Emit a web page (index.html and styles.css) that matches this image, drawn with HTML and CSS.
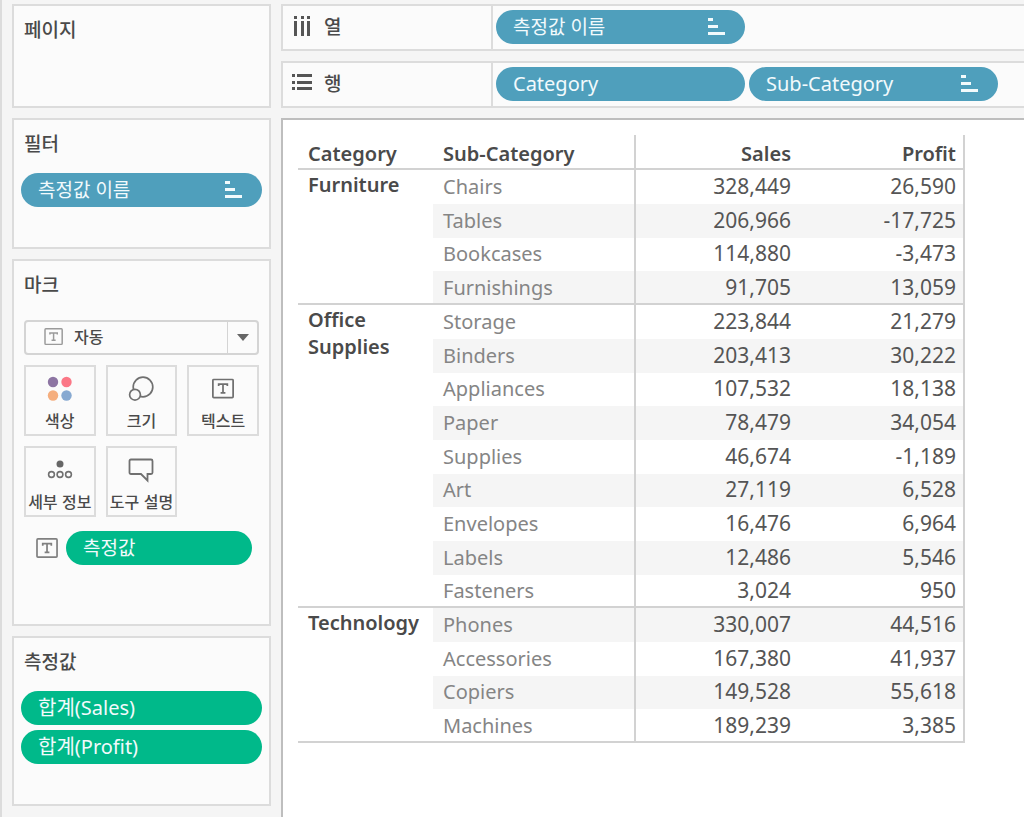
FILE: index.html
```html
<!DOCTYPE html>
<html lang="ko">
<head>
<meta charset="utf-8">
<title>Sales / Profit</title>
<link rel="stylesheet" href="styles.css">
</head>
<body>
<svg class="defs" aria-hidden="true">
  <symbol id="sort" viewBox="0 0 18 18"><path fill="currentColor" d="M0 0h5v3H0zM0 7h10v3H0zM0 14h17v3H0z"/></symbol>
  <symbol id="text-mark" viewBox="0 0 24 22"><rect x="1" y="1" width="21" height="19" rx="1" fill="none" stroke="currentColor" stroke-width="1.800"/><path fill="none" stroke="currentColor" stroke-width="1.800" d="M7 8V6h9v2M11.500 6v9M9 15h5"/></symbol>
</svg>
<div class="app">
  <aside class="side">
    <section class="card pages"><h2>페이지</h2></section>
    <section class="card filters">
      <h2>필터</h2>
      <button class="pill blue">측정값 이름<svg class="sort"><use href="#sort"/></svg></button>
    </section>
    <section class="card marks">
      <h2>마크</h2>
      <div class="mark-type">
        <svg class="type-icon" aria-hidden="true"><use href="#text-mark"/></svg>
        <select aria-label="마크"><option>자동</option></select>
        <span class="arrow"><svg width="12" height="7" viewBox="0 0 12 7"><path d="M0 0h12L6 7z" fill="#666"/></svg></span>
      </div>
      <div class="tiles">
        <button class="tile"><svg viewBox="0 0 26 26"><circle cx="6" cy="6" r="5.200" fill="#8d75a3"/><circle cx="19.500" cy="6" r="5.200" fill="#fb7786"/><circle cx="6" cy="19.500" r="5.200" fill="#f5ae7e"/><circle cx="19.500" cy="19.500" r="5.200" fill="#87a9d1"/></svg>색상</button>
        <button class="tile"><svg viewBox="0 0 26 26"><g fill="#fbfbfb" stroke="#707070" stroke-width="1.700"><circle cx="15" cy="11" r="9.800"/><circle cx="7" cy="18.700" r="5.400"/></g></svg>크기</button>
        <button class="tile"><svg viewBox="-2 -2 27 26" class="gray"><use href="#text-mark" width="24" height="22"/></svg>텍스트</button>
        <button class="tile"><svg viewBox="0 0 26 26"><circle cx="13" cy="7" r="3.500" fill="#666"/><g fill="none" stroke="#707070" stroke-width="1.600"><circle cx="4.500" cy="17.500" r="2.900"/><circle cx="13" cy="17.500" r="2.900"/><circle cx="21.500" cy="17.500" r="2.900"/></g></svg>세부 정보</button>
        <button class="tile"><svg viewBox="0 0 26 26"><path d="M3 2.500h20q1.500 0 1.500 1.500V15.500q0 1.500-1.500 1.500h-3.500v6.500L13 17H3q-1.500 0-1.500-1.500V4q0-1.500 1.500-1.500z" fill="none" stroke="#707070" stroke-width="1.800"/></svg>도구 설명</button>
      </div>
      <div class="mark-row">
        <svg class="mark-icon" aria-hidden="true"><use href="#text-mark"/></svg>
        <button class="pill green">측정값</button>
      </div>
    </section>
    <section class="card measures">
      <h2>측정값</h2>
      <button class="pill green latin">합계(Sales)</button>
      <button class="pill green latin">합계(Profit)</button>
    </section>
  </aside>
  <main class="main">
    <section class="shelf">
      <h2 class="shelf-name"><svg viewBox="0 0 20 20"><path fill="#555" d="M2 0h3v3H2zM9 0h3v3H9zM15 0h3v3h-3zM2 5h3v15H2zM9 5h3v15H9zM15 5h3v15h-3z"/></svg>열</h2>
      <div class="pills"><button class="pill blue">측정값 이름<svg class="sort"><use href="#sort"/></svg></button></div>
    </section>
    <section class="shelf">
      <h2 class="shelf-name"><svg viewBox="0 0 20 20"><path fill="#555" d="M0 1h3v3H0zM5 1h15v3H5zM0 8h3v3H0zM5 8h15v3H5zM0 14h3v3H0zM5 14h15v3H5z"/></svg>행</h2>
      <div class="pills"><button class="pill blue latin">Category</button><button class="pill blue latin">Sub-Category<svg class="sort"><use href="#sort"/></svg></button></div>
    </section>
    <section class="sheet">
      <table>
        <colgroup><col class="c1"><col class="c2"><col class="c3"><col class="c4"></colgroup>
        <thead><tr><th>Category</th><th>Sub-Category</th><th>Sales</th><th>Profit</th></tr></thead>
        <tbody>
          <tr><th rowspan="4">Furniture</th><td>Chairs</td><td>328,449</td><td>26,590</td></tr>
          <tr class="band"><td>Tables</td><td>206,966</td><td>-17,725</td></tr>
          <tr><td>Bookcases</td><td>114,880</td><td>-3,473</td></tr>
          <tr class="band"><td>Furnishings</td><td>91,705</td><td>13,059</td></tr>
        </tbody>
        <tbody>
          <tr><th rowspan="9">Office Supplies</th><td>Storage</td><td>223,844</td><td>21,279</td></tr>
          <tr class="band"><td>Binders</td><td>203,413</td><td>30,222</td></tr>
          <tr><td>Appliances</td><td>107,532</td><td>18,138</td></tr>
          <tr class="band"><td>Paper</td><td>78,479</td><td>34,054</td></tr>
          <tr><td>Supplies</td><td>46,674</td><td>-1,189</td></tr>
          <tr class="band"><td>Art</td><td>27,119</td><td>6,528</td></tr>
          <tr><td>Envelopes</td><td>16,476</td><td>6,964</td></tr>
          <tr class="band"><td>Labels</td><td>12,486</td><td>5,546</td></tr>
          <tr><td>Fasteners</td><td>3,024</td><td>950</td></tr>
        </tbody>
        <tbody>
          <tr class="band"><th rowspan="4">Technology</th><td>Phones</td><td>330,007</td><td>44,516</td></tr>
          <tr><td>Accessories</td><td>167,380</td><td>41,937</td></tr>
          <tr class="band"><td>Copiers</td><td>149,528</td><td>55,618</td></tr>
          <tr><td>Machines</td><td>189,239</td><td>3,385</td></tr>
        </tbody>
      </table>
    </section>
  </main>
</div>
</body>
</html>
```
FILE: styles.css
```css
* { box-sizing: border-box; }
body {
  margin: 0;
  background: #f5f5f5;
  color: #4a4a4a;
  font-family: "Noto Sans", "Noto Sans CJK KR", sans-serif;
}
h2 { margin: 0; font-size: 19px; line-height: 28px; font-weight: 500; font-family: "Noto Sans CJK KR", sans-serif; }
button, select { font: inherit; color: inherit; margin: 0; padding: 0; border: 0; background: none; }
.defs { position: absolute; width: 0; height: 0; }
.app {
  display: grid;
  grid-template-columns: 259px 1fr;
  gap: 10px;
  min-height: 100vh;
  padding: 4px 0 0 10px;
  border-left: 2px solid #dcdcdc;
}
.side { display: flex; flex-direction: column; gap: 10px; }
.card { background: #fbfbfb; border: 2px solid #dcdcdc; padding: 9px 7px; }
.card h2 { margin: 0 0 16px; padding-left: 3px; }
.pages { min-height: 104px; }
.filters { min-height: 131px; }
.marks { min-height: 367px; padding: 9px 10px; }
.marks h2 { padding-left: 0; margin-bottom: 22px; }
.measures { min-height: 170px; }
.pill {
  display: flex;
  align-items: center;
  justify-content: space-between;
  width: 100%;
  height: 34px;
  padding: 0 19px 0 17px;
  border-radius: 17px;
  color: #f2fafc;
  font-size: 19px;
  line-height: 34px;
  text-align: left;
  font-family: "Noto Sans", "Noto Sans CJK KR", sans-serif;
}
.latin { font-size: 20px; }
.blue { background: #4f9fbc; }
.green { background: #00b98a; }
.measures .pill + .pill { margin-top: 5px; }
.sort { width: 18px; height: 18px; }
.mark-type { position: relative; display: flex; height: 35px; border: 2px solid #d4d4d4; border-radius: 4px; }
.mark-type select {
  appearance: none;
  flex: 1;
  padding: 0 0 3px 48px;
  font: 500 16px "Noto Sans CJK KR", sans-serif;
}
.type-icon { position: absolute; left: 18px; top: 6px; width: 20px; height: 18px; color: #9a9a9a; }
.arrow { position: absolute; top: 0; right: 0; bottom: 0; width: 30px; display: grid; place-items: center; border-left: 1px solid #d4d4d4; pointer-events: none; }
.tiles { display: grid; grid-template-columns: repeat(3, 1fr); gap: 10px; margin-top: 10px; }
.tile {
  display: flex;
  flex-direction: column;
  align-items: center;
  gap: 6px;
  height: 71px;
  padding-top: 9px;
  border: 2px solid #dcdcdc;
  font: 500 16px/24px "Noto Sans CJK KR", sans-serif;
  white-space: nowrap;
}
.tile svg { width: 26px; height: 26px; flex: none; }
.gray { color: #707070; }
.mark-row { display: flex; align-items: center; gap: 6px; margin-top: 14px; padding: 0 7px 0 11px; }
.mark-icon { width: 25px; height: 21px; flex: none; color: #808080; }
.main { display: flex; flex-direction: column; gap: 10px; min-width: 0; }
.shelf { display: flex; height: 47px; background: #fbfbfb; border: 2px solid #dcdcdc; border-right: 0; }
.shelf-name { display: flex; align-items: center; gap: 12px; width: 210px; padding: 0 0 3px 9px; border-right: 2px solid #dcdcdc; }
.shelf-name svg { width: 20px; height: 20px; }
.pills { display: flex; align-items: flex-start; gap: 4px; padding: 4px 0 0 3px; }
.pills .pill { width: 249px; }
.sheet { flex: 1; background: #fff; border-top: 2px solid #bebebe; border-left: 2px solid #bebebe; padding: 15px; }
table { width: 667px; table-layout: fixed; border-collapse: separate; border-spacing: 0; font-size: 21px; line-height: 27px; }
.c1 { width: 135px; }
.c2 { width: 203px; }
.c3 { width: 164px; }
th, td { padding: 0 9px 0 10px; text-align: left; }
th { font-weight: 600; font-size: 20px; }
thead th { height: 35px; padding-top: 3px; border-bottom: 2px solid #d2d2d2; }
tbody th { vertical-align: top; padding-top: 1px; background: #fff; border-bottom: 2px solid #d2d2d2; }
td { height: 34px; padding-bottom: 2px; color: #555; }
tr:nth-child(3n) td { height: 33px; }
tbody tr:last-child td { padding-bottom: 0; border-bottom: 2px solid #d2d2d2; }
.band td { background: #f5f5f5; }
thead th:nth-child(2), td:nth-last-child(3) { border-right: 2px solid #d2d2d2; }
td:nth-last-child(3) { color: #858585; font-size: 20px; }
th:nth-last-child(-n+2), td:nth-last-child(-n+2) { text-align: right; }
th:last-child, td:last-child { border-right: 2px solid #d2d2d2; padding-right: 7px; }
```
